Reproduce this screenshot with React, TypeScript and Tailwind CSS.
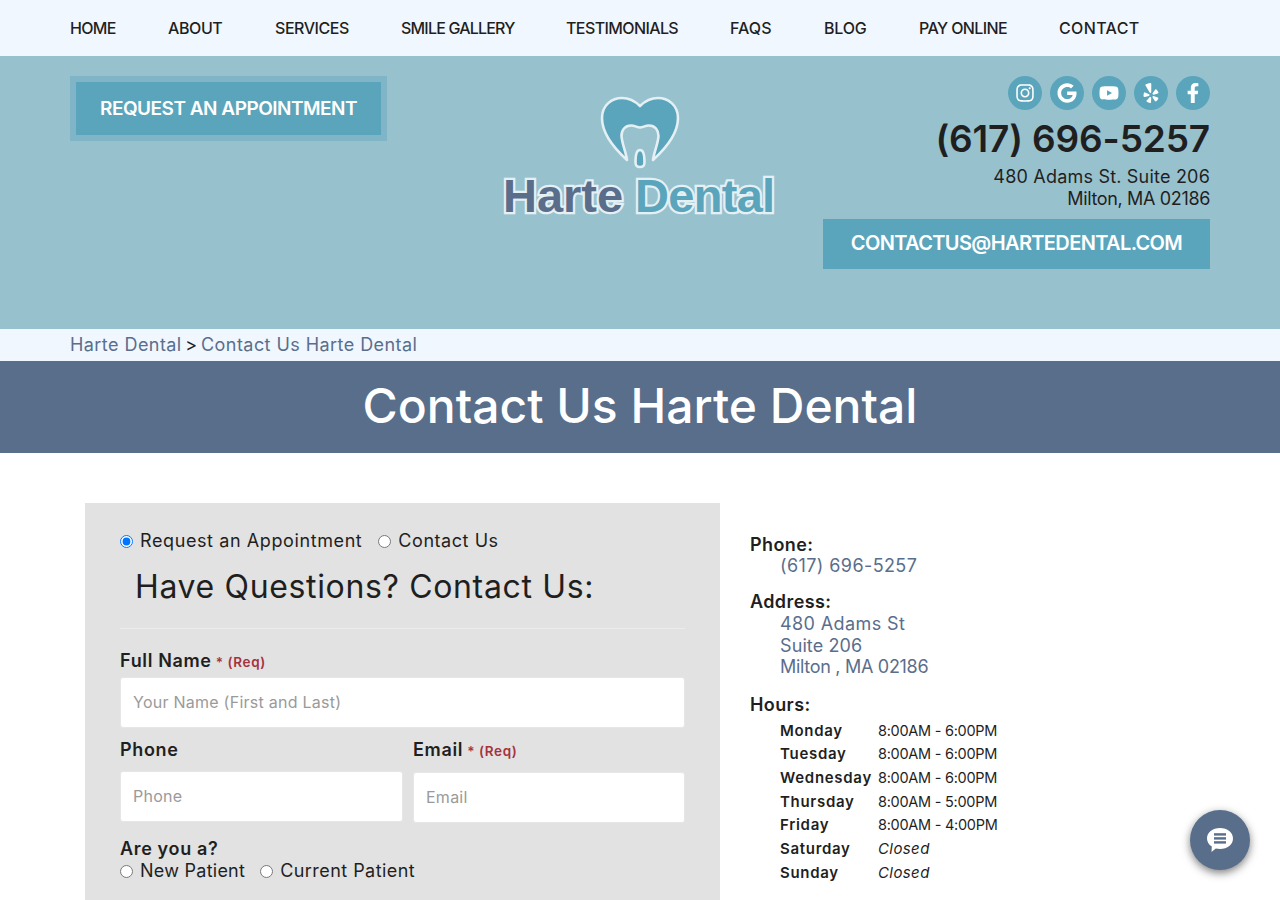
import React from "react";
import { FaInstagram, FaGoogle, FaYoutube, FaYelp, FaFacebookF } from "react-icons/fa";

const font = "font-['Inter','Noto_Sans',sans-serif]";
const nav: [string, string][] = [
  ["HOME", "w-[46px] tracking-[-0.7px]"],
  ["ABOUT", "w-[55px] tracking-[-0.4px]"],
  ["SERVICES", "w-[74px] tracking-[-0.45px]"],
  ["SMILE GALLERY", "w-[113px] tracking-[-0.8px]"],
  ["TESTIMONIALS", "w-[112px] tracking-[-0.6px]"],
  ["FAQS", "w-[42px] tracking-[0.05px]"],
  ["BLOG", "w-[43px] tracking-[-0.2px]"],
  ["PAY ONLINE", "w-[88px] tracking-[-0.6px]"],
  ["CONTACT", "w-[80px] tracking-[0.35px]"],
];
const hours = [
  ["Monday", "8:00AM - 6:00PM"],
  ["Tuesday", "8:00AM - 6:00PM"],
  ["Wednesday", "8:00AM - 6:00PM"],
  ["Thursday", "8:00AM - 5:00PM"],
  ["Friday", "8:00AM - 4:00PM"],
  ["Saturday", "Closed"],
  ["Sunday", "Closed"],
];
const social = [FaInstagram, FaGoogle, FaYoutube, FaYelp, FaFacebookF];

function Logo() {
  const common = {
    fontFamily: "'Liberation Sans', Arial, sans-serif",
    fontWeight: 700,
    fontSize: 47,
    paintOrder: "stroke",
    stroke: "#e4f0f4",
    strokeWidth: 4.5,
    strokeLinejoin: "miter" as const,
  };
  return (
    <svg width="280" height="130" viewBox="0 0 280 130" className="block">
      <path
        d="M127 68 C116 58 102 42 102 26 C102 13 112 6 122 6 C130 6 136 10 140 14 C144 10 150 6 158 6 C168 6 178 13 178 26 C178 42 164 58 153 68 C154 60 158 52 158.5 44 C158.5 38 155 33.5 149 33.5 C145 33.5 143 35.5 140 35.5 C137 35.5 135 33.5 131 33.5 C125 33.5 121.5 38 121.5 44 C122 52 126 60 127 68 Z"
        fill="#5aa5bb"
        stroke="#e4f0f4"
        strokeWidth="2.6"
        strokeLinejoin="round"
      />
      <path d="M140 58 C137 58 135.5 62 135.5 70 C135.5 74 137 75 140 75 C143 75 144.5 74 144.5 70 C144.5 62 143 58 140 58 Z" fill="#5aa5bb" stroke="#e4f0f4" strokeWidth="2.6" />
      <text x="3" y="120" fill="#5a6e8c" {...common}>Harte</text>
      <text x="135" y="120" fill="#5aa5bb" letterSpacing="-0.7" {...common}>Dental</text>
    </svg>
  );
}

function Label({ text, req }: { text: string; req?: boolean }) {
  return (
    <div className="text-[18px] leading-[22px] font-semibold text-[#1f1f1f] tracking-[0.65px]">
      {text}
      {req && <span className="ml-1 text-[13.5px] font-semibold text-[#a5333d] tracking-[0.6px]">* (Req)</span>}
    </div>
  );
}

function Field({ placeholder }: { placeholder: string }) {
  return (
    <input
      readOnly
      placeholder={placeholder}
      className="block w-full h-[51px] bg-white rounded-[3px] border border-[#e6e6e6] px-3 pb-[2px] text-[16px] tracking-[0.25px] placeholder:text-[#9a9a9a] outline-none"
    />
  );
}

function Radio({ label, checked, name, track }: { label: string; checked?: boolean; name: string; track: string }) {
  return (
    <label className={`flex items-center gap-[7px] text-[18px] leading-[22px] text-[#1f1f1f] ${track}`}>
      <input type="radio" name={name} defaultChecked={checked} className="m-0 w-[13px] h-[13px]" />
      {label}
    </label>
  );
}

export default function App() {
  return (
    <div className={`${font} h-[900px] overflow-hidden bg-white text-[#1f1f1f]`}>
      <nav className="h-[56px] pb-[1px] bg-[#f0f7ff] pl-[70px] flex items-center gap-[52px] text-[16px] font-medium text-[#1f1f1f]">
        {nav.map(([n, w]) => (
          <a key={n} className={`${w} whitespace-nowrap`}>{n}</a>
        ))}
      </nav>

      <header className="h-[273px] bg-[#98c1ce] px-[70px] pt-[20px] grid grid-cols-[1fr_280px_1fr]">
        <div>
          <a className="inline-flex items-center justify-center w-[317px] h-[65px] pt-[2px] border-[6px] border-[#7fb5c6] bg-[#5aa5bb] text-white text-[19px] font-semibold tracking-[-0.5px]">
            REQUEST AN APPOINTMENT
          </a>
        </div>
        <div className="pt-[16px]">
          <Logo />
        </div>
        <div className="flex flex-col items-end">
          <div className="flex gap-2">
            {social.map((Icon, i) => (
              <span key={i} className="w-[34px] h-[34px] rounded-full bg-[#5aa5bb] flex items-center justify-center text-white text-[20px]">
                <Icon />
              </span>
            ))}
          </div>
          <div className="mt-[5px] text-[37px] leading-[48px] font-semibold text-[#1f1f1f] tracking-[-0.15px] whitespace-nowrap">(617) 696-5257</div>
          <div className="mt-[3px] text-[18px] leading-[22px] text-right">
            <div className="tracking-[0.2px]">480 Adams St. Suite 206</div>
            <div className="tracking-[-0.35px]">Milton, MA 02186</div>
          </div>
          <a className="mt-[9px] w-[387px] h-[50px] pb-[2px] bg-[#5aa5bb] text-white text-[20px] font-semibold flex items-center justify-center tracking-[-0.63px] whitespace-nowrap">
            CONTACTUS@HARTEDENTAL.COM
          </a>
        </div>
      </header>

      <div className="h-[32px] pb-[2px] bg-[#f0f7ff] pl-[70px] flex items-center text-[18px] text-[#5a6e8c] tracking-[0.44px] whitespace-pre">
        Harte Dental <span className="-mx-[2px] text-[#1f1f1f]">&gt;</span> Contact Us Harte Dental
      </div>

      <div className="h-[92px] pb-[3px] bg-[#596e8a] flex items-center justify-center text-white text-[48px] font-medium">
        Contact Us Harte Dental
      </div>

      <main className="pt-[50px] pl-[85px] flex gap-[30px] items-start">
        <section className="w-[635px] h-[500px] shrink-0 bg-[#e2e2e2] px-[35px] pt-[27px]">
          <div className="flex gap-[16px]">
            <Radio name="kind" label="Request an Appointment" checked track="tracking-[0.6px]" />
            <Radio name="kind" label="Contact Us" track="tracking-[0.55px]" />
          </div>
          <h2 className="mt-[15px] pl-[15px] text-[32px] leading-[40px] font-normal text-[#1f1f1f] tracking-[0.65px]">Have Questions? Contact Us:</h2>
          <hr className="mt-[21px] border-0 border-t border-[#ececec]" />
          <div className="mt-[21px]">
            <Label text="Full Name" req />
          </div>
          <div className="mt-[4px]">
            <Field placeholder="Your Name (First and Last)" />
          </div>
          <div className="mt-[11px] grid grid-cols-[283px_272px] gap-[10px]">
            <div>
              <Label text="Phone" />
              <div className="mt-[10px]"><Field placeholder="Phone" /></div>
            </div>
            <div>
              <Label text="Email" req />
              <div className="mt-[10px]"><Field placeholder="Email" /></div>
            </div>
          </div>
          <div className="mt-[15px]"><Label text="Are you a?" /></div>
          <div className="flex gap-[15px]">
            <Radio name="patient" label="New Patient" track="tracking-[0.25px]" />
            <Radio name="patient" label="Current Patient" track="tracking-[0.45px]" />
          </div>
        </section>

        <aside className="pt-[31px] text-[18px]">
          <div className="font-semibold leading-[22px] tracking-[0.4px]">Phone:</div>
          <div className="-mt-[1px] pl-[30px] leading-[22px] text-[#5a6e8c] tracking-[0.4px]">(617) 696-5257</div>
          <div className="mt-[14px] font-semibold leading-[22px] tracking-[0.4px]">Address:</div>
          <div className="pl-[30px] leading-[21.5px] text-[#5a6e8c]">
            <div className="tracking-[0.4px]">480 Adams St</div>
            <div className="tracking-[0.1px]">Suite 206</div>
            <div className="tracking-[-0.3px]">Milton , MA 02186</div>
          </div>
          <div className="mt-[16px] font-semibold leading-[22px] tracking-[0.4px]">Hours:</div>
          <div className="mt-[3px] pl-[30px] grid grid-cols-[98px_auto] text-[15px] leading-[23.67px]">
            {hours.map(([d, h]) => (
              <React.Fragment key={d}>
                <span className="font-semibold whitespace-nowrap tracking-[0.7px]">{d}</span>
                <span className={h === "Closed" ? "italic tracking-[0.4px]" : "text-[14.5px] tracking-[-0.27px]"}>{h}</span>
              </React.Fragment>
            ))}
          </div>
        </aside>
      </main>

      <button className="fixed left-[1190px] top-[810px] w-[60px] h-[60px] rounded-full bg-[#596e8a] flex items-center justify-center shadow-[0_3px_8px_rgba(0,0,0,0.5)]">
        <svg width="28" height="28" viewBox="0 0 28 28">
          <path d="M14 2 C21.5 2 27 6.5 27 12.5 C27 18.5 21.5 23 14 23 C12.5 23 11 22.8 9.8 22.5 L5.5 26 L5.8 20.6 C2.8 18.6 1 15.7 1 12.5 C1 6.5 6.5 2 14 2 Z" fill="#fff" />
          <rect x="8" y="7.2" width="12" height="2.4" fill="#596e8a" />
          <rect x="8" y="11.2" width="12" height="2.4" fill="#596e8a" />
          <rect x="8" y="15.2" width="12" height="2.4" fill="#596e8a" />
        </svg>
      </button>
    </div>
  );
}
